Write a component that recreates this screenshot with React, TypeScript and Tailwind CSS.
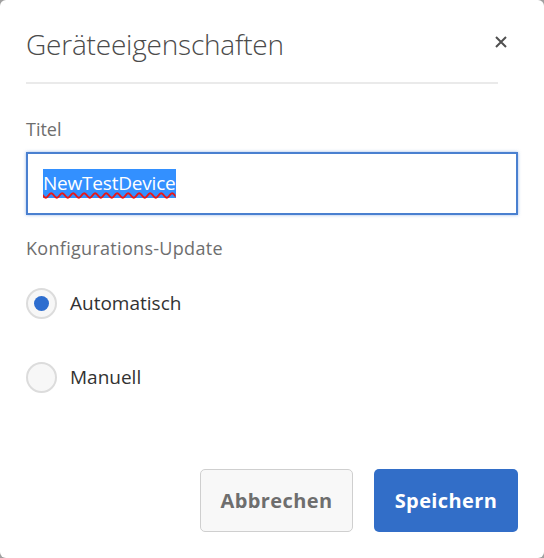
import React from 'react';

const Radio: React.FC<{ label: string; checked?: boolean }> = ({ label, checked }) => (
  <label className="flex items-center gap-[13px] h-[30px]">
    <span className="w-[31px] h-[31px] rounded-full border-2 border-[#dcdcdc] bg-[#f7f7f7] flex items-center justify-center">
      {checked && <span className="w-[15px] h-[15px] rounded-full bg-[#2d6dcf]" />}
    </span>
    <span className="text-[19px] text-[#323232]">{label}</span>
  </label>
);

export default function App() {
  return (
    <div className="w-[544px] h-[558px] bg-[#a0a0a0]" style={{ fontFamily: '"Open Sans", "Liberation Sans", sans-serif' }}>
      <div className="w-full h-full bg-white rounded-[6px] flex flex-col px-[26px]">
        <div className="flex items-center justify-between pt-[24px] pb-[18px] border-b-2 border-[#eaeaea] mr-[20px]">
          <h1 className="text-[28px] font-light text-[#4b4b4b] leading-[40px] tracking-[-0.2px]">Geräteeigenschaften</h1>
          <svg width="14" height="14" viewBox="0 0 14 14" className="mr-[-10px] mt-[-4px]">
            <path d="M2 2 L12 12 M12 2 L2 12" stroke="#505050" strokeWidth="2" />
          </svg>
        </div>

        <div className="mt-[33px] text-[18px] text-[#6e6e6e] leading-[24px]">Titel</div>
        <div className="mt-[11px] h-[63px] border-2 border-[#4a80d0] shadow-[0_0_3px_rgba(60,120,210,0.5)] flex items-center pl-[15px]">
          <span className="bg-[#3390ff] text-white text-[19px] leading-[29px] underline decoration-wavy decoration-[#e81818] decoration-[1.5px] underline-offset-[2px] tracking-[-0.2px]">
            NewTestDevice
          </span>
        </div>

        <div className="mt-[21px] text-[18px] text-[#6e6e6e] leading-[24px] tracking-[0.3px]">Konfigurations-Update</div>
        <div className="mt-[28px] flex flex-col gap-[44px]">
          <Radio label="Automatisch" checked />
          <Radio label="Manuell" />
        </div>

        <div className="mt-auto mb-[26px] flex justify-end gap-[21px]">
          <button className="w-[153px] h-[63px] rounded-[5px] border border-[#cfcfcf] bg-[#f8f8f8] text-[#6e6e6e] text-[20px] font-bold tracking-[0.4px]">
            Abbrechen
          </button>
          <button className="w-[144px] h-[63px] rounded-[5px] bg-[#326ec8] text-white text-[20px] font-bold tracking-[0.4px]">
            Speichern
          </button>
        </div>
      </div>
    </div>
  );
}
